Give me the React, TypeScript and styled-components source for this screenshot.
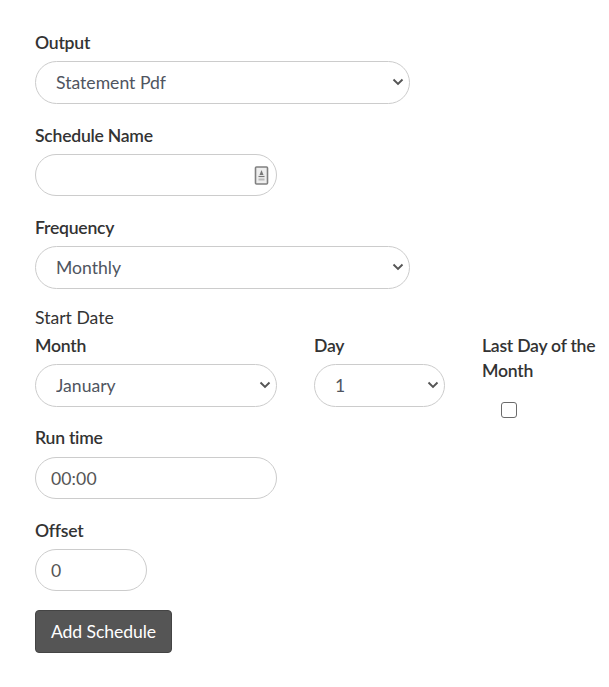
import React from "react";
import styled, { createGlobalStyle } from "styled-components";

const Global = createGlobalStyle`
  html, body { margin: 0; padding: 0; background: #fff; }
  body { font-family: Lato, "Open Sans", sans-serif; color: #333; font-size: 17.6px; line-height: 25px; }
  * { box-sizing: border-box; }
`;

const Form = styled.form`
  display: flex;
  flex-direction: column;
  align-items: flex-start;
  padding: 30px 0 0 35px;
  width: 609px;
  height: 687px;
`;

const Field = styled.div<{ $width: number }>`
  width: ${(p) => p.$width}px;
  margin-bottom: 19px;
`;

const Label = styled.label<{ $gap?: number }>`
  display: block;
  font-weight: 600;
  font-size: 17.6px;
  line-height: 25px;
  margin-bottom: ${(p) => p.$gap ?? 6}px;
  letter-spacing: -0.25px;
  color: #333;
`;

const Caption = styled.div`
  font-size: 17.6px;
  line-height: 25px;
  color: #333;
  margin-top: -3px;
  margin-bottom: 3px;
`;

const SelectWrap = styled.div`
  position: relative;
  height: 43px;
`;

const Select = styled.select`
  appearance: none;
  width: 100%;
  height: 43px;
  border: 1px solid #ccc;
  border-radius: 22px;
  background: #fff;
  color: #4f5560;
  font: 400 17.6px Lato, sans-serif;
  padding: 0 30px 0 20px;
  outline: none;
`;

const Chevron = styled.svg`
  position: absolute;
  right: 6px;
  top: 17px;
  width: 12px;
  height: 8px;
  pointer-events: none;
`;

const Input = styled.input`
  display: block;
  width: 100%;
  height: 42px;
  border: 1px solid #ccc;
  border-radius: 21px;
  background: #fff;
  color: #555;
  font: 400 17.6px Lato, sans-serif;
  letter-spacing: 0.1px;
  padding: 0 15px;
  outline: none;
`;

const InputWrap = styled.div`
  position: relative;
`;

const KeyIcon = styled.svg`
  position: absolute;
  right: 8px;
  top: 12px;
  width: 15px;
  height: 19px;
`;

const DateRow = styled.div`
  display: flex;
  align-items: flex-start;
  margin-bottom: 7px;
`;

const MonthField = styled.div`
  width: 242px;
  margin-right: 37px;
`;

const DayField = styled.div`
  width: 131px;
  margin-right: 37px;
`;

const LastDayField = styled.div`
  width: 120px;
`;

const CheckRow = styled.div`
  padding: 19px 0 0 19px;
  display: flex;
`;

const Check = styled.input`
  appearance: none;
  margin: 0;
  width: 16px;
  height: 16px;
  border: 1px solid #6b6b6b;
  border-radius: 3px;
  background: #fff;
`;

const Submit = styled.button`
  width: 137px;
  height: 43px;
  background: #555;
  border: 1px solid #444;
  border-radius: 4px;
  color: #fff;
  font: 400 17.6px Lato, sans-serif;
  letter-spacing: -0.08px;
  padding: 0;
`;

const Arrow = () => (
  <Chevron viewBox="0 0 12 8" aria-hidden="true">
    <path d="M1.5 1.5 6 6l4.5-4.5" fill="none" stroke="#555" strokeWidth="1.9" />
  </Chevron>
);

const Dropdown = ({ value }: { value: string }) => (
  <SelectWrap>
    <Select defaultValue={value}>
      <option>{value}</option>
    </Select>
    <Arrow />
  </SelectWrap>
);

export default function App() {
  return (
    <>
      <Global />
      <Form onSubmit={(e) => e.preventDefault()}>
        <Field $width={375}>
          <Label>Output</Label>
          <Dropdown value="Statement Pdf" />
        </Field>
        <Field $width={242}>
          <Label>Schedule Name</Label>
          <InputWrap>
            <Input type="text" />
            <KeyIcon viewBox="0 0 15 19" aria-hidden="true">
              <rect x="1.5" y="1" width="12" height="17" rx="1" fill="#eee" stroke="#808080" strokeWidth="1.6" />
              <path d="M7.5 4 9.5 9h-4z" fill="#777" />
              <path d="M4.5 10.5h6" stroke="#777" strokeWidth="1.2" />
              <path d="M4.5 13.5h6" stroke="#bbb" strokeWidth="2" />
            </KeyIcon>
          </InputWrap>
        </Field>
        <Field $width={375}>
          <Label>Frequency</Label>
          <Dropdown value="Monthly" />
        </Field>
        <Caption>Start Date</Caption>
        <DateRow>
          <MonthField>
            <Label>Month</Label>
            <Dropdown value="January" />
          </MonthField>
          <DayField>
            <Label>Day</Label>
            <Dropdown value="1" />
          </DayField>
          <LastDayField>
            <Label $gap={0}>Last Day of the Month</Label>
            <CheckRow>
              <Check type="checkbox" />
            </CheckRow>
          </LastDayField>
        </DateRow>
        <Field $width={242}>
          <Label $gap={7}>Run time</Label>
          <Input type="text" defaultValue="00:00" />
        </Field>
        <Field $width={112}>
          <Label>Offset</Label>
          <Input type="text" defaultValue="0" />
        </Field>
        <Submit type="submit">Add Schedule</Submit>
      </Form>
    </>
  );
}
